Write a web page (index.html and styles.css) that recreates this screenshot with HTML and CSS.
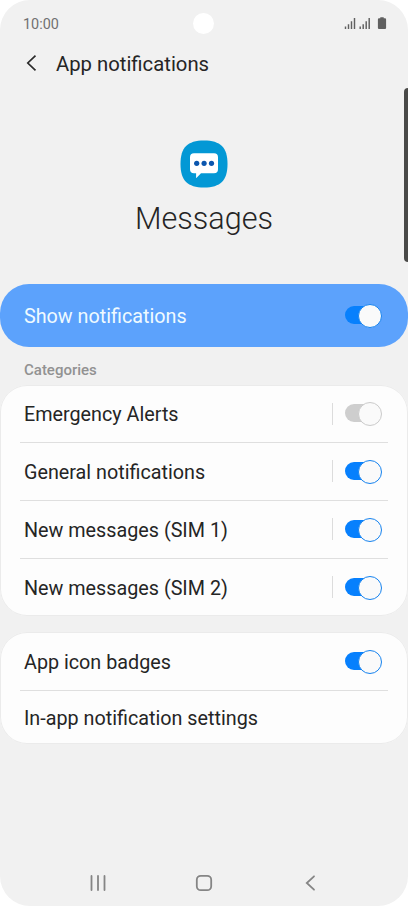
FILE: index.html
```html
<!DOCTYPE html>
<html lang="en">
<head>
<meta charset="utf-8">
<title>App notifications</title>
<link rel="stylesheet" href="styles.css">
</head>
<body>
<div class="screen">
  <header class="status">
    <span class="time">10:00</span>
    <svg class="status-icons" width="44" height="16" viewBox="0 0 44 16">
      <path d="M1.500 10.500V13M4.500 8.300V13M7.500 5.300V13M10.500 2V13M16.200 10.500V13M19.200 8.300V13M22.200 5.300V13M25.200 2V13" stroke="#606060" stroke-width="1.450"/>
      <path d="M36.300 1.200h3.400v1.100h1.300q1.100 0 1.100 1.100v8.500q0 1.100-1.100 1.100h-6q-1.100 0-1.100-1.100V3.400q0-1.100 1.100-1.100h1.300z" fill="#606060"/>
    </svg>
  </header>
  <div class="camera"></div>
  <div class="edge-panel"></div>
  <div class="title-bar">
    <svg width="12" height="18" viewBox="0 0 12 18"><path d="M10.500 1.700L2.800 9l7.700 7.300" fill="none" stroke="#2b2b2b" stroke-width="1.700"/></svg>
    <h1>App notifications</h1>
  </div>
  <section class="app">
    <svg width="48" height="48" viewBox="0 0 48 48">
      <path d="M24 .5C40.500.5 47.500 7.500 47.500 24S40.500 47.500 24 47.500.5 40.500.5 24 7.500.5 24 .5z" fill="#0398d5"/>
      <path d="M14 13.300h20q4 0 4 4v12q0 4-4 4H21l-4.900 5v-5H14q-4 0-4-4v-12q0-4 4-4z" fill="#fff"/>
      <g fill="#0b56ae"><circle cx="16.700" cy="23.300" r="2.600"/><circle cx="24.100" cy="23.300" r="2.600"/><circle cx="31.500" cy="23.300" r="2.600"/></g>
    </svg>
    <h2>Messages</h2>
  </section>
  <div class="banner row">
    <span class="label">Show notifications</span>
    <span class="toggle on"></span>
  </div>
  <h3 class="caption">Categories</h3>
  <div class="card categories">
    <div class="row"><span class="label">Emergency Alerts</span><span class="divider"></span><span class="toggle"></span></div>
    <div class="row"><span class="label">General notifications</span><span class="divider"></span><span class="toggle on"></span></div>
    <div class="row"><span class="label">New messages (SIM 1)</span><span class="divider"></span><span class="toggle on"></span></div>
    <div class="row"><span class="label">New messages (SIM 2)</span><span class="divider"></span><span class="toggle on"></span></div>
  </div>
  <div class="card extras">
    <div class="row"><span class="label">App icon badges</span><span class="toggle on"></span></div>
    <div class="row short"><span class="label">In-app notification settings</span></div>
  </div>
  <nav class="nav">
    <svg width="16" height="18" viewBox="0 0 16 18"><path d="M1.500 2v14M8 2v14M14.500 2v14" stroke="#858585" stroke-width="1.800" stroke-linecap="round"/></svg>
    <svg width="18" height="18" viewBox="0 0 18 18"><rect x="1.800" y="1.800" width="14.400" height="14.400" rx="4" fill="none" stroke="#858585" stroke-width="1.800"/></svg>
    <svg width="18" height="18" viewBox="0 0 18 18"><path d="M12 2.300L4.800 9l7.200 6.700" fill="none" stroke="#858585" stroke-width="1.800" stroke-linecap="round"/></svg>
  </nav>
</div>
</body>
</html>
```
FILE: styles.css
```css
* { box-sizing: border-box; }
body { margin: 0; background: #fff; font-family: Roboto, sans-serif; color: #252525; }
h1, h2, h3 { margin: 0; font-weight: 400; }
svg { display: block; flex: none; }
.screen {
  position: relative;
  width: 408px;
  height: 906px;
  overflow: hidden;
  border-radius: 30px;
  background: #f1f1f1;
  display: flex;
  flex-direction: column;
}
.status {
  height: 47px;
  padding: 0 20px 0 23px;
  display: flex;
  align-items: center;
  justify-content: space-between;
}
.time { padding-top: 1px; font-size: 14.4px; color: #707070; }
.camera {
  position: absolute;
  left: 193px;
  top: 13px;
  width: 21px;
  height: 21px;
  border-radius: 50%;
  background: #fff;
}
.edge-panel {
  position: absolute;
  left: 404px;
  top: 88px;
  width: 8px;
  height: 174px;
  border-radius: 4px;
  background: #4a4a48;
}
.title-bar {
  height: 32px;
  padding-left: 25px;
  display: flex;
  align-items: center;
  gap: 19px;
}
.title-bar h1 { padding-top: 2px; font-size: 20.3px; line-height: 32px; }
.app {
  height: 205px;
  padding-top: 61px;
  display: flex;
  flex-direction: column;
  align-items: center;
}
.app h2 { margin-top: 11px; font-size: 30.6px; line-height: 40px; font-weight: 300; }
.row {
  position: relative;
  height: 58px;
  padding: 0 26px 0 24px;
  display: flex;
  align-items: center;
}
.label { flex: 1; padding-top: 2px; font-size: 19.75px; white-space: nowrap; }
.banner { height: 63px; border-radius: 29px; background: #5ca2fc; color: #effaff; }
.caption {
  height: 38px;
  padding: 13px 0 0 24px;
  font-size: 15px;
  line-height: 20px;
  font-weight: 500;
  color: #929292;
}
.card {
  border-radius: 27px;
  background: #fdfdfd;
  box-shadow: inset 0 0 0 1px #ebebeb;
}
.card .row + .row::before {
  content: "";
  position: absolute;
  left: 20px;
  right: 20px;
  top: 0;
  height: 1px;
  background: #dfdfdf;
}
.categories .row:first-child { height: 57px; }
.extras { margin-top: 16px; }
.row.short { height: 54px; }
.divider { width: 1.5px; height: 22px; margin-right: 12px; background: #dcdcdc; }
.toggle { position: relative; width: 37px; height: 22px; flex: none; }
.banner .toggle, .categories .row:first-child .toggle { margin-bottom: 1px; }
.toggle::before {
  content: "";
  position: absolute;
  left: 0;
  top: 2px;
  width: 34px;
  height: 18px;
  border-radius: 9px;
  background: #cecece;
}
.toggle::after {
  content: "";
  position: absolute;
  right: 0;
  top: 0;
  width: 22px;
  height: 22px;
  border: 1px solid #cbcbcb;
  border-radius: 50%;
  background: #fafafa;
}
.toggle.on::before { background: #0780fd; }
.toggle.on::after { border-color: #1683ef; }
.nav {
  margin-top: auto;
  height: 47px;
  padding: 0 88px 0 90px;
  display: flex;
  align-items: center;
  justify-content: space-between;
}
```
